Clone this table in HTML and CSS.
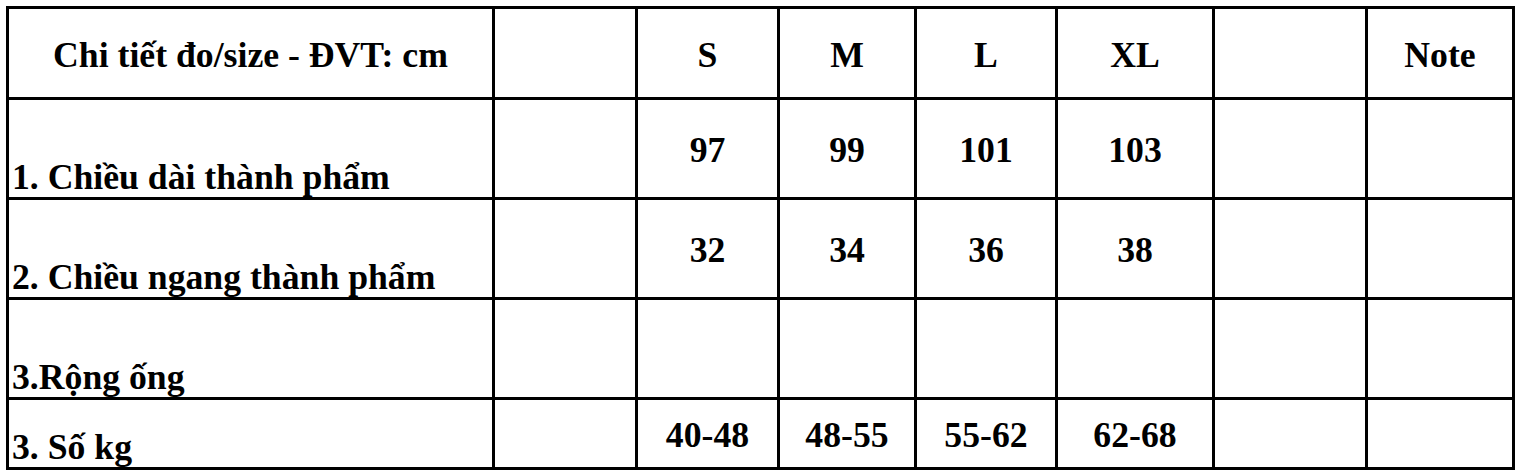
FILE: index.html
```html
<!DOCTYPE html>
<html lang="vi">
<head>
<meta charset="utf-8">
<title>Bảng size</title>
<link rel="stylesheet" href="styles.css">
</head>
<body>
<div class="sheet">
  <div class="cell mid">Chi tiết đo/size - ĐVT: cm</div>
  <div class="cell"></div>
  <div class="cell mid">S</div>
  <div class="cell mid">M</div>
  <div class="cell mid">L</div>
  <div class="cell mid">XL</div>
  <div class="cell"></div>
  <div class="cell mid">Note</div>

  <div class="cell label">1. Chiều dài thành phẩm</div>
  <div class="cell"></div>
  <div class="cell mid">97</div>
  <div class="cell mid">99</div>
  <div class="cell mid">101</div>
  <div class="cell mid">103</div>
  <div class="cell"></div>
  <div class="cell"></div>

  <div class="cell label">2. Chiều ngang thành phẩm</div>
  <div class="cell"></div>
  <div class="cell mid">32</div>
  <div class="cell mid">34</div>
  <div class="cell mid">36</div>
  <div class="cell mid">38</div>
  <div class="cell"></div>
  <div class="cell"></div>

  <div class="cell label">3.Rộng ống</div>
  <div class="cell"></div>
  <div class="cell"></div>
  <div class="cell"></div>
  <div class="cell"></div>
  <div class="cell"></div>
  <div class="cell"></div>
  <div class="cell"></div>

  <div class="cell label">3. Số kg</div>
  <div class="cell"></div>
  <div class="cell mid">40-48</div>
  <div class="cell mid">48-55</div>
  <div class="cell mid">55-62</div>
  <div class="cell mid">62-68</div>
  <div class="cell"></div>
  <div class="cell"></div>
</div>
</body>
</html>
```
FILE: styles.css
```css
html, body {
  background: #ffffff;
}
body {
  margin: 0;
  padding: 6px;
  font-family: "Liberation Serif", "Times New Roman", serif;
  font-weight: bold;
  font-size: 35.7px;
  line-height: 40px;
  color: #000000;
}
.sheet {
  display: grid;
  grid-template-columns: 486px 143px 142px 137px 141px 157px 153px 147px;
  grid-template-rows: 91px 100px 100px 100px 70px;
  width: max-content;
  border-left: 3px solid #000000;
  border-top: 3px solid #000000;
}
.cell {
  box-sizing: border-box;
  border-right: 3px solid #000000;
  border-bottom: 3px solid #000000;
  display: flex;
  white-space: nowrap;
}
.mid {
  align-items: center;
  justify-content: center;
  padding-top: 3px;
}
.label {
  align-items: flex-end;
  justify-content: flex-start;
  padding-left: 3px;
}
```
